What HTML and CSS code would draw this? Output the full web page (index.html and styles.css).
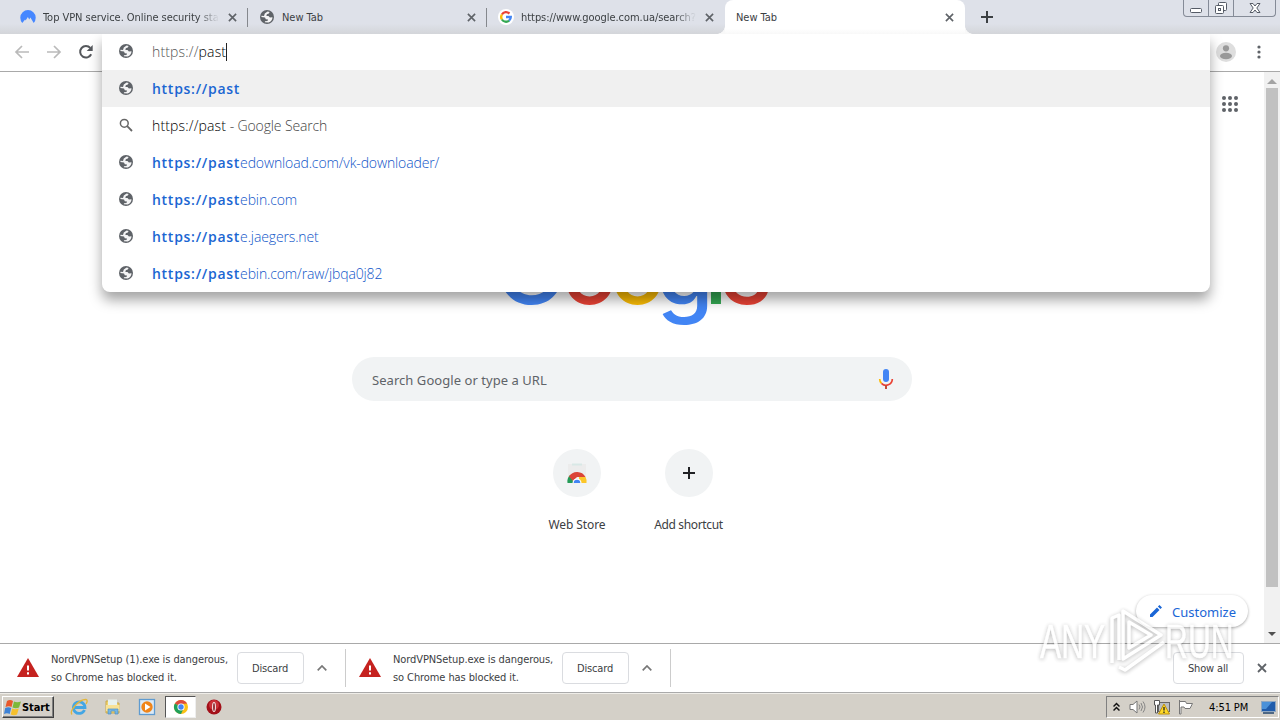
FILE: index.html
```
<!DOCTYPE html>
<html lang="en">
<head>
    <meta charset="UTF-8">
    <meta name="viewport" content="width=device-width, initial-scale=1.0">
    <title>New Tab</title>
    <link rel="stylesheet" href="styles.css">
</head>
<body>
    <!-- shared icons -->
    <svg class="defs" width="0" height="0">
        <symbol id="globe" viewBox="0 0 16 16">
            <circle cx="8" cy="8" r="7" fill="#5f6368"/>
            <path d="M8.600 2.400 10.600 3 9.800 4.600 7.800 5.200 7.400 6.900 9.500 7.100 10.900 8.600 13.500 8.200C13.500 10.500 12 12.800 9.600 13.500L5.800 13.200 6 12.200 8.500 12 9 10.500 6.800 10.200 6 8.500 2.400 8 2.500 6.700 5 6.900 5.800 4.600Z" fill="#f4f4f5"/>
        </symbol>
        <symbol id="close" viewBox="0 0 10 10">
            <path d="M1 1 9 9M9 1 1 9" stroke="#5f6368" stroke-width="1.8" fill="none"/>
        </symbol>
        <symbol id="warning" viewBox="0 0 22 20">
            <path d="M11 0 22 19H0Z" fill="#c5221f"/>
            <path d="M11 7.5V12.5M11 14.2V16.4" stroke="#fff" stroke-width="2"/>
        </symbol>
        <symbol id="chevron" viewBox="0 0 10 6">
            <path d="M.7 5.3 5 1 9.3 5.3" stroke="#777" stroke-width="1.7" fill="none"/>
        </symbol>
        <symbol id="chrome" viewBox="0 0 16 16">
            <circle cx="8" cy="8" r="7" fill="#fbc116"/>
            <path d="M8 8 1.9 4.5A7 7 0 0 1 14.1 4.5L8 5Z" fill="#dd4b3e"/>
            <path d="M1.9 4.5A7 7 0 0 0 8 15L10.6 9.5 8 8Z" fill="#20a05a"/>
            <circle cx="8" cy="8" r="3.6" fill="#fff"/>
            <circle cx="8" cy="8" r="2.7" fill="#4285f4"/>
        </symbol>
    </svg>

    <div class="tabstrip">
        <div class="tab first">
            <svg class="favicon" viewBox="0 0 16 16"><path d="M2.3 14A7.7 7.7 0 1 1 13.7 14L10.4 8.5 9.2 10.4 7.9 8 5.6 11.5 5.1 10.6Z" fill="#4687ff"/></svg>
            <span class="title title-vpn">Top VPN service. Online security sta</span>
            <svg class="tab-close"><use href="#close"/></svg>
        </div>
        <div class="tab">
            <svg class="favicon"><use href="#globe"/></svg>
            <span class="title">New Tab</span>
            <svg class="tab-close"><use href="#close"/></svg>
        </div>
        <div class="tab last">
            <svg class="favicon" viewBox="0 0 16 16">
                <circle cx="8" cy="8" r="8" fill="#fff"/>
                <g fill="none" stroke-width="2.3">
                    <path d="M3.9 5.5A4.8 4.8 0 0 1 11.4 4.6" stroke="#ea4335"/>
                    <path d="M3.9 5.5A4.8 4.8 0 0 0 3.9 10.5" stroke="#fbbc05"/>
                    <path d="M3.9 10.5A4.8 4.8 0 0 0 11.1 11.6" stroke="#34a853"/>
                    <path d="M11.1 11.6A4.8 4.8 0 0 0 12.8 8H8" stroke="#4285f4"/>
                </g>
            </svg>
            <span class="title title-url">https://www.google.com.ua/search?</span>
            <svg class="tab-close"><use href="#close"/></svg>
        </div>
        <div class="tab active">
            <span class="title">New Tab</span>
            <svg class="tab-close"><use href="#close"/></svg>
        </div>
        <svg class="new-tab" viewBox="0 0 12 12"><path d="M6 0V12M0 6H12" stroke="#3c4043" stroke-width="2"/></svg>
        <div class="window-buttons">
            <div class="wbtn"><svg width="14" height="17"><rect x="1.5" y="8.5" width="11" height="4" rx="1" fill="#fff" stroke="#555b66"/></svg></div>
            <div class="wbtn"><svg width="14" height="17" fill="#fff" stroke="#555b66"><rect x="4.500" y="2.500" width="8" height="8" rx="1"/><rect x="1.500" y="5.500" width="8" height="8" rx="1"/><rect x="4.500" y="8.500" width="2" height="2"/></svg></div>
            <div class="wbtn wide"><svg width="14" height="17"><path d="M2 3.500H5L7 6 9 3.500H12L8.800 8 12 12.500H9L7 10 5 12.500H2L5.200 8Z" fill="#fff" stroke="#555b66"/></svg></div>
        </div>
    </div>

    <div class="toolbar">
        <svg class="nav" viewBox="0 0 16 16"><path d="M15 8H2M8 2 2 8 8 14" stroke="#bababa" stroke-width="1.7" fill="none"/></svg>
        <svg class="nav" viewBox="0 0 16 16"><path d="M1 8H14M8 2 14 8 8 14" stroke="#bababa" stroke-width="1.7" fill="none"/></svg>
        <svg class="nav" viewBox="0 0 16 16"><path d="M13.200 10.300A5.800 5.800 0 1 1 12.300 3.900" stroke="#55585c" stroke-width="2" fill="none"/><path d="M14.700 1V7H8.700Z" fill="#55585c"/></svg>
        <svg class="avatar" viewBox="0 0 20 20"><circle cx="10" cy="10" r="10" fill="#dedede"/><circle cx="10" cy="6.300" r="3.100" fill="#999"/><ellipse cx="10" cy="14" rx="6" ry="3.200" fill="#999"/></svg>
        <svg class="menu" viewBox="0 0 4 14" fill="#5f6368"><circle cx="2" cy="2" r="1.600"/><circle cx="2" cy="7" r="1.600"/><circle cx="2" cy="12" r="1.600"/></svg>
    </div>

    <div class="page">
        <div class="content">
            <svg class="apps" viewBox="0 0 16 16" fill="#5f6368">
                <circle cx="2" cy="2" r="2"/><circle cx="8" cy="2" r="2"/><circle cx="14" cy="2" r="2"/>
                <circle cx="2" cy="8" r="2"/><circle cx="8" cy="8" r="2"/><circle cx="14" cy="8" r="2"/>
                <circle cx="2" cy="14" r="2"/><circle cx="8" cy="14" r="2"/><circle cx="14" cy="14" r="2"/>
            </svg>
            <svg class="logo" width="284" height="100" viewBox="0 0 284 100">
                <text x="40.500" y="69" fill="#4285f4" class="big">G</text>
                <text x="99.500" y="69" fill="#ea4335">o</text>
                <text x="147.500" y="69" fill="#fbbc05">o</text>
                <text x="195" y="69.500" fill="#4285f4">g</text>
                <text x="226" y="69" fill="#34a853">l</text>
                <text x="255.500" y="69" fill="#ea4335">e</text>
            </svg>
            <div class="searchbox">
                <span>Search Google or type a URL</span>
                <svg width="16" height="22" viewBox="0 0 16 22">
                    <rect x="5" y="1" width="6" height="13" rx="3" fill="#4285f4"/>
                    <path d="M1.700 11A6.300 6.300 0 0 0 3.500 15.400" stroke="#fbbc05" stroke-width="1.700" fill="none"/>
                    <path d="M3.500 15.400A6.300 6.300 0 0 0 14.300 11" stroke="#ea4335" stroke-width="1.700" fill="none"/>
                    <path d="M8 17V21" stroke="#c44b35" stroke-width="2"/>
                </svg>
            </div>
            <div class="shortcuts">
                <div class="shortcut">
                    <div class="circle"><svg width="24" height="24" viewBox="0 0 24 24">
                        <rect x="3" y="3" width="18" height="19" fill="#ececec"/>
                        <path d="M7 3.500H17" stroke="#d8e8e6" stroke-width="2"/>
                        <path d="M2.500 22A9.500 9.500 0 0 1 5 14L9 22Z" fill="#249b57"/>
                        <path d="M4 15.500A9.500 9.500 0 0 1 20.500 16H12L8 20Z" fill="#db4437"/>
                        <path d="M21.500 22A9.500 9.500 0 0 0 20.500 16H14V22Z" fill="#fbc62a"/>
                        <path d="M7.500 22A4.500 4.500 0 0 1 16.500 22Z" fill="#fff"/>
                        <path d="M8.700 22A3.300 3.300 0 0 1 15.300 22Z" fill="#4285f4"/>
                    </svg></div>
                    <span>Web Store</span>
                </div>
                <div class="shortcut">
                    <div class="circle"><svg width="12" height="12"><path d="M6 0V12M0 6H12" stroke="#202124" stroke-width="2"/></svg></div>
                    <span class="tight">Add shortcut</span>
                </div>
            </div>
            <div class="customize">
                <svg width="12" height="12" viewBox="0 0 12 12" fill="#1a66d6"><path d="M0 9.500 7 2.500 9.500 5 2.500 12H0ZM7.900 1.600 9.500 0 12 2.500 10.400 4.100Z"/></svg>
                <span>Customize</span>
            </div>
        </div>
        <div class="scrollbar">
            <svg width="10" height="5"><path d="M0 5H10L5 0Z" fill="#a3a3a3"/></svg>
            <div class="thumb"></div>
            <svg width="8" height="4"><path d="M0 0H8L4 4Z" fill="#505050"/></svg>
        </div>
    </div>

    <div class="downloads">
        <div class="download d1">
            <svg class="warn"><use href="#warning"/></svg>
            <p>NordVPNSetup (1).exe is dangerous,<br>so Chrome has blocked it.</p>
            <button>Discard</button>
            <svg class="chev"><use href="#chevron"/></svg>
        </div>
        <div class="download d2">
            <svg class="warn"><use href="#warning"/></svg>
            <p>NordVPNSetup.exe is dangerous,<br>so Chrome has blocked it.</p>
            <button>Discard</button>
            <svg class="chev"><use href="#chevron"/></svg>
        </div>
        <button class="show-all">Show all</button>
        <svg class="bar-close"><use href="#close"/></svg>
    </div>

    <div class="taskbar">
        <div class="start">
            <svg width="18" height="17" viewBox="0 0 18 17">
                <path d="M3 2Q6 0 9 2L7.500 8Q5 6.500 1.500 8Z" fill="#e9582b"/>
                <path d="M10 2.500Q13 4 17 2.500L15 8.500Q12 10 8.500 8.500Z" fill="#7db83a"/>
                <path d="M1.200 9Q4.500 7.500 7.200 9L5.700 15Q3 13.500 0 15Z" fill="#3f83d6"/>
                <path d="M8.200 9.500Q11 11 14.800 9.500L13 15.500Q10 17 6.700 15.500Z" fill="#f6c02c"/>
            </svg>
            <span>Start</span>
        </div>
        <div class="launch">
            <svg width="18" height="18" viewBox="0 0 18 18">
                <path d="M14.500 12A5.800 5.800 0 1 1 15 9.500H5" fill="none" stroke="#43a6e4" stroke-width="2.800"/>
                <path d="M2 16.500C-1 13 9 1 16 1.500 18 2 17 4.500 16 6" fill="none" stroke="#e3b63b" stroke-width="1.300"/>
            </svg>
            <svg width="18" height="18" viewBox="0 0 18 18">
                <path d="M2 3H7L8 5H15V15H2Z" fill="#f1d36b" stroke="#c9a94e"/>
                <path d="M4 1.500H13V7H4Z" fill="#e8f2ee"/>
                <path d="M2 7H15.500V13H2Z" fill="#f8e296"/>
                <path d="M4 16V11H14V16H11V13H7V16Z" fill="#76b6e2" stroke="#4b91c8" stroke-width=".7"/>
            </svg>
            <svg width="18" height="18" viewBox="0 0 18 18">
                <rect x="1.500" y="1.500" width="15" height="15" fill="#dceaf6" stroke="#5f9bd0" stroke-width="1.300"/>
                <circle cx="9" cy="9" r="5.700" fill="#f08519"/>
                <path d="M7 5.500 12.500 9 7 12.500Z" fill="#fff"/>
            </svg>
        </div>
        <div class="task"><svg width="16" height="16"><use href="#chrome"/></svg></div>
        <svg class="opera" width="16" height="16" viewBox="0 0 16 16"><circle cx="8" cy="8" r="7.500" fill="#a31019"/><circle cx="8" cy="6" r="5" fill="#cb3138"/><ellipse cx="8" cy="8" rx="2" ry="5" fill="#f3dede"/><ellipse cx="8" cy="8" rx=".8" ry="4" fill="#7e0b12"/></svg>
        <div class="tray">
            <svg width="7" height="10"><path d="M.500 4.500 3.500 1.500 6.500 4.500M.500 8.500 3.500 5.500 6.500 8.500" fill="none" stroke="#111" stroke-width="1.500"/></svg>
            <svg width="17" height="16" viewBox="0 0 17 16"><path d="M1 5.500H4L8 2V14L4 10.500H1Z" fill="#fff" stroke="#777"/><path d="M10 5.500Q12 8 10 10.500M12 4Q15 8 12 12M14 2.500Q18 8 14 13.500" fill="none" stroke="#858585"/></svg>
            <svg width="17" height="16" viewBox="0 0 17 16"><rect x="5.500" y="3.500" width="11" height="9" fill="#b9bdc0" stroke="#666"/><path d="M1.500 1.500H6.500V6H4.500V14H2.500V6H1.500Z" fill="#fff" stroke="#555"/><path d="M11 5 16.500 15H5.500Z" fill="#ffda27" stroke="#bd910b"/><path d="M11 8V11.500M11 12.500V14" stroke="#222" stroke-width="1.300"/></svg>
            <svg width="17" height="16" viewBox="0 0 17 16"><path d="M2.500 2.500H8.500L9.500 4.500H15.500L13 9.500H8L7 8H4V15H2.500V1Z" fill="#fff" stroke="#777"/></svg>
            <span>4:51 PM</span>
            <svg width="15" height="13" viewBox="0 0 15 13"><rect x=".500" y=".500" width="14" height="10" fill="#205cab" stroke="#8fa7c1"/><path d="M1 1H11L5 8H1Z" fill="#4a91d9"/><path d="M2 12H13" stroke="#23466e" stroke-width="1.500"/></svg>
        </div>
    </div>

    <!-- omnibox suggestions -->
    <div class="omnibox">
        <div class="row input">
            <svg class="icon"><use href="#globe"/></svg>
            <span><i>https://</i><em>past</em></span><div class="caret"></div>
        </div>
        <div class="row selected"><svg class="icon"><use href="#globe"/></svg><span><b>https://past</b></span></div>
        <div class="row query"><svg class="icon" viewBox="0 0 16 16" fill="none" stroke="#666"><circle cx="6.300" cy="6.300" r="3.900" stroke-width="1.500"/><path d="M9.200 9.200 14 14" stroke-width="1.800"/></svg><span><em>https://past</em> - Google Search</span></div>
        <div class="row"><svg class="icon"><use href="#globe"/></svg><span><b>https://past</b>edownload.com/vk-downloader/</span></div>
        <div class="row"><svg class="icon"><use href="#globe"/></svg><span><b>https://past</b>ebin.com</span></div>
        <div class="row"><svg class="icon"><use href="#globe"/></svg><span><b>https://past</b>e.jaegers.net</span></div>
        <div class="row"><svg class="icon"><use href="#globe"/></svg><span><b>https://past</b>ebin.com/raw/jbqa0j82</span></div>
    </div>

    <div class="watermark">
        <span class="word">ANY</span>
        <svg width="58" height="66" viewBox="0 0 58 66" fill="none" stroke-linejoin="round">
            <path d="M5 56V11L12 8V53M16 4 54 28 16 52ZM22 15 44 28 22 41ZM12 60 18 63 57 35" stroke="#fff" stroke-width="3.500"/>
        </svg>
        <span class="word">RUN</span>
    </div>
</body>
</html>
```
FILE: styles.css
```
* { box-sizing: border-box; }
body {
    margin: 0;
    width: 1280px;
    height: 720px;
    overflow: hidden;
    position: relative;
    display: flex;
    flex-direction: column;
    background: #fff;
    font-family: "DejaVu Sans Condensed", "DejaVu Sans", sans-serif;
    font-stretch: condensed;
    font-size: 11px;
    color: #3c4043;
}
svg { flex: none; display: block; }
.defs { position: absolute; }

/* tabs */
.tabstrip {
    height: 34px;
    flex: none;
    display: flex;
    background: linear-gradient(#dee1e9 70%, #d3d5d9);
}
.tab {
    width: 239px;
    height: 34px;
    padding: 0 11px;
    display: flex;
    align-items: center;
    position: relative;
    flex: none;
}
.tab.first { width: 248px; padding-left: 20px; }
.tab.last { width: 238px; }
.tab:not(.active):not(.last)::after {
    content: "";
    position: absolute;
    right: 0;
    top: 8px;
    width: 1px;
    height: 19px;
    background: #85888d;
}
.favicon { width: 16px; height: 16px; margin-right: 7px; }
.title {
    flex: 1;
    overflow: hidden;
    white-space: nowrap;
    margin-right: 9px;
    letter-spacing: -0.05px;
}
.title-vpn, .title-url { -webkit-mask-image: linear-gradient(90deg, #000 88%, transparent); mask-image: linear-gradient(90deg, #000 88%, transparent); }
.tab-close { width: 9px; height: 9px; }
.tab.active {
    width: 240px;
    background: linear-gradient(#fff 85%, #f8f8f8);
    border-radius: 8px 8px 0 0;
}
/* flared feet of the active tab */
.tab.active::before, .tab.active::after {
    content: "";
    position: absolute;
    bottom: 0;
    width: 8px;
    height: 8px;
}
.tab.active::before { left: -8px; background: radial-gradient(circle at 0 0, transparent 7.5px, #f8f8f8 8px); }
.tab.active::after { right: -8px; background: radial-gradient(circle at 100% 0, transparent 7.5px, #f8f8f8 8px); }
.new-tab { width: 12px; height: 12px; margin: 11px 0 0 16px; }
.window-buttons {
    margin-left: auto;
    margin-right: 4px;
    width: 93px;
    height: 17px;
    display: flex;
    border: 1px solid #858b97;
    border-top: 0;
    border-radius: 0 0 4px 4px;
}
.wbtn { width: 25px; display: flex; justify-content: center; border-right: 1px solid #858b97; }
.wbtn.wide { flex: 1; border: 0; }

/* toolbar */
.toolbar {
    height: 38px;
    flex: none;
    display: flex;
    align-items: center;
    padding: 0 19px 1px 14px;
    border-bottom: 1px solid #a9a9a9;
}
.nav { width: 16px; height: 16px; margin-right: 16px; }
.avatar { width: 20px; height: 20px; margin-left: auto; }
.menu { width: 4px; height: 14px; margin-left: 21px; }

/* new tab page */
.page { flex: 1; display: flex; min-height: 0; }
.content {
    flex: 1;
    position: relative;
    display: flex;
    flex-direction: column;
    align-items: center;
}
.apps { width: 16px; height: 16px; position: absolute; right: 26px; top: 24px; }
.logo {
    margin-top: 163px;
    font-family: Inter, sans-serif;
    font-size: 93px;
    font-weight: 500;
    text-anchor: middle;
}
.logo .big { font-size: 97px; }
.searchbox {
    width: 560px;
    height: 44px;
    margin-top: 22px;
    padding: 0 18px 0 20px;
    border-radius: 22px;
    background: #f1f3f4;
    display: flex;
    flex: none;
    align-items: center;
    justify-content: space-between;
    font: 13px "Noto Sans", sans-serif;
    letter-spacing: .05px;
    color: #5f6368;
}
.searchbox span { padding-top: 2px; }
.shortcuts { display: flex; margin-top: 48px; padding-left: 2px; }
.shortcut { width: 112px; display: flex; flex-direction: column; align-items: center; font: 12px "Noto Sans", sans-serif; }
.shortcut span { margin-top: 19px; letter-spacing: -0.1px; }
.shortcut .tight { letter-spacing: -0.35px; padding-right: 1px; }
.circle {
    width: 48px;
    height: 48px;
    border-radius: 50%;
    background: #f1f3f4;
    display: flex;
    align-items: center;
    justify-content: center;
}
.customize {
    position: absolute;
    right: 16px;
    bottom: 16px;
    width: 112px;
    height: 32px;
    padding-left: 14px;
    border-radius: 16px;
    background: #fff;
    box-shadow: 0 1px 3px rgba(0, 0, 0, .35);
    display: flex;
    align-items: center;
    gap: 10px;
    font: 13px "Noto Sans", sans-serif;
    color: #1a66d6;
}
.customize span { padding-top: 1px; }
.scrollbar {
    width: 16px;
    background: #f1f1f1;
    display: flex;
    flex-direction: column;
    align-items: center;
    padding: 7px 0;
}
.thumb { width: 12px; height: 499px; margin: 4px 0 auto; background: #c1c1c1; }

/* download bar */
.downloads {
    height: 49px;
    flex: none;
    display: flex;
    align-items: center;
    border-top: 1px solid #a9a9a9;
    background: #fff;
    padding-right: 13px;
}
.download { display: flex; align-items: center; height: 38px; border-right: 1px solid #ccc; }
.d1 { width: 346px; padding-left: 17px; }
.d2 { width: 325px; padding-left: 13px; }
.download p { margin: 0 0 0 12px; padding-top: 2px; line-height: 18px; white-space: nowrap; letter-spacing: -0.09px; }
.warn { width: 22px; height: 20px; }
button {
    width: 67px;
    height: 32px;
    padding: 0 1px 0 0;
    border: 1px solid #dadce0;
    border-radius: 4px;
    background: #fff;
    font: inherit;
    letter-spacing: -0.15px;
    color: #3c4043;
}
.download button { margin-left: auto; }
.chev { width: 10px; height: 6px; margin: 0 18px 0 13px; }
.show-all { width: 71px; margin-left: auto; }
.bar-close { width: 10px; height: 10px; margin-left: 13px; }

/* taskbar */
.taskbar {
    height: 28px;
    flex: none;
    display: flex;
    align-items: center;
    background: #d4d0c8;
    border-top: 1px solid #aaa;
    box-shadow: inset 0 1px #efede8;
    padding: 1px 1px 0 2px;
}
.start {
    width: 52px;
    height: 22px;
    padding-left: 1px;
    display: flex;
    align-items: center;
    border: 1px solid;
    border-color: #fff #404040 #404040 #fff;
    box-shadow: inset -1px -1px #808080;
    font-weight: bold;
    letter-spacing: -0.1px;
    color: #000;
}
.launch { display: flex; gap: 16px; margin-left: 16px; }
.task {
    width: 31px;
    height: 22px;
    margin-left: 9px;
    display: flex;
    align-items: center;
    justify-content: center;
    background: #fff;
    border: 1px solid;
    border-color: #555 #eee #eee #555;
}
.opera { margin-left: 10px; }
.tray {
    width: 173px;
    height: 22px;
    margin-left: auto;
    padding: 0 2px 0 6px;
    display: flex;
    align-items: center;
    gap: 7px;
    border: 1px solid;
    border-color: #808080 #fff #fff #808080;
    color: #000;
}
.tray svg:first-child { margin-right: 2px; }
.tray span { margin: 0 auto 0 8px; white-space: nowrap; letter-spacing: -0.1px; }

/* suggestions popup */
.omnibox {
    position: absolute;
    left: 102px;
    top: 34px;
    width: 1108px;
    height: 258px;
    background: #fff;
    border-radius: 0 0 8px 8px;
    box-shadow: 0 8px 13px rgba(0, 0, 0, .36);
    clip-path: inset(0 -20px -30px -20px);
    font: 300 14px "Open Sans", "Noto Sans", sans-serif;
    letter-spacing: -0.13px;
    color: #0f55c8;
}
.row { height: 37px; padding-left: 16px; display: flex; align-items: center; white-space: nowrap; }
.row.input { height: 36px; padding-bottom: 1px; }
.row.selected { background: #f0f0f0; }
.row .icon { width: 16px; height: 16px; margin: -1px 18px 0 0; }
.row b { color: #1b66d2; font-weight: 600; letter-spacing: .72px; }
.row i, .row em { font-style: normal; letter-spacing: .15px; }
.row i { color: #555; }
.row em { color: #000; }
.row.query { color: #444; }
.caret { width: 1px; height: 18px; background: #222; }

/* watermark */
.watermark {
    position: absolute;
    left: 1040px;
    top: 607px;
    display: flex;
    align-items: center;
    filter: drop-shadow(0 1px 2px rgba(0, 0, 0, .35));
    opacity: .8;
}
.word {
    width: 67px;
    padding-top: 2px;
    font: 48px "Liberation Sans", sans-serif;
    color: #fff;
    -webkit-text-stroke: .5px #fff;
    transform: scaleX(.66);
    transform-origin: left center;
}
```
